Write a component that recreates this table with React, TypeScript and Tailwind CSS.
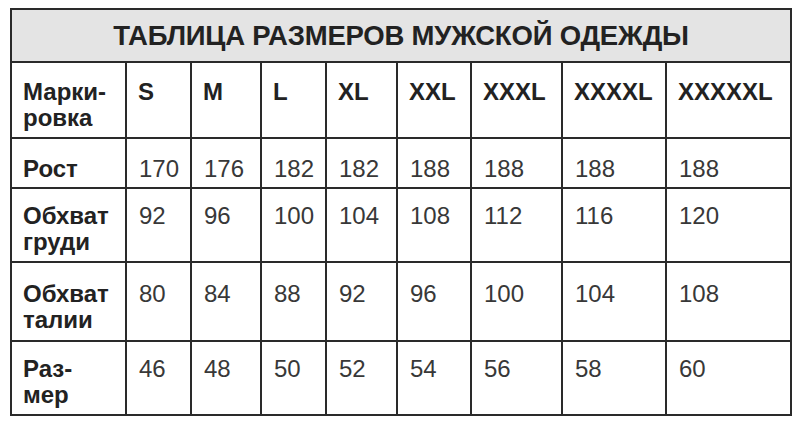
import { Fragment } from "react"

const sizes = ["S", "M", "L", "XL", "XXL", "XXXL", "XXXXL", "XXXXXL"]

const rows = [
  { label: ["Рост"], values: ["170", "176", "182", "182", "188", "188", "188", "188"], pad: "pt-[17px]" },
  { label: ["Обхват", "груди"], values: ["92", "96", "100", "104", "108", "112", "116", "120"], pad: "pt-[14px]" },
  { label: ["Обхват", "талии"], values: ["80", "84", "88", "92", "96", "100", "104", "108"], pad: "pt-[18px]" },
  { label: ["Раз-", "мер"], values: ["46", "48", "50", "52", "54", "56", "58", "60"], pad: "pt-[14px]" },
]

export default function App() {
  return (
    <main className="w-[800px] h-[427px] bg-white pl-[10px] pt-[8px] font-['Liberation_Sans',Arial,sans-serif]">
      <div className="grid w-fit grid-cols-[113px_63px_68px_63px_69px_72px_89px_102px_123px] grid-rows-[51px_74px_48px_72px_77px_72px] gap-[2px] bg-[#2a2a2a] p-[2px]">

        {/* title */}
        <div className="col-span-9 flex items-center justify-center bg-[#e4e4e4] text-[27.5px] font-bold text-[#222] tracking-[-0.2px]">
          ТАБЛИЦА РАЗМЕРОВ МУЖСКОЙ ОДЕЖДЫ
        </div>

        {/* header row */}
        <div className="bg-white pl-[11px] pt-[16px] text-[24px] leading-[26px] font-bold text-[#222]">
          Марки-<br />ровка
        </div>
        {sizes.map((s) => (
          <div key={s} className="bg-white pl-[11px] pt-[16px] text-[24px] leading-[26px] font-bold text-[#222]">
            {s}
          </div>
        ))}

        {/* data rows */}
        {rows.map((row) => (
          <Fragment key={row.label.join()}>
            <div className={`bg-white pl-[11px] ${row.pad} text-[24px] leading-[26px] font-bold text-[#222]`}>
              {row.label.map((l) => (
                <div key={l}>{l}</div>
              ))}
            </div>
            {row.values.map((v, i) => (
              <div key={i} className={`bg-white pl-[12px] ${row.pad} text-[24px] leading-[26px] text-[#383838]`}>
                {v}
              </div>
            ))}
          </Fragment>
        ))}
      </div>
    </main>
  )
}
